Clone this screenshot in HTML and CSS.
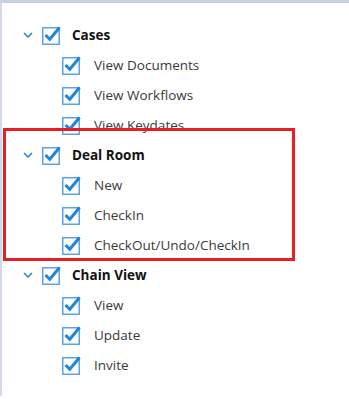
FILE: index.html
```html
<!DOCTYPE html>
<html>
<head>
<title>Permissions</title>
<link rel="stylesheet" href="styles.css">
</head>
<body>
<div id="main">
<ul class="tree">
<li class="group">
<div class="row parent">
<svg class="chev" width="10" height="6" viewBox="0 0 10 6"><path d="M1 1 L5 5 L9 1" fill="none" stroke="#2b88d8" stroke-width="1.6"/></svg>
<svg class="box" width="20" height="20" viewBox="0 0 20 20"><rect x="1.75" y="2.75" width="16.5" height="16.5" fill="#fff" stroke="#5aa3e6" stroke-width="1.5"/><path d="M4.5 10 L8.8 14.3 L18.5 2.5" fill="none" stroke="#1f86dc" stroke-width="3"/></svg>
<span>Cases</span>
</div>
<ul>
<li class="row child"><svg class="box" width="20" height="20" viewBox="0 0 20 20"><rect x="1.75" y="2.75" width="16.5" height="16.5" fill="#fff" stroke="#5aa3e6" stroke-width="1.5"/><path d="M4.5 10 L8.8 14.3 L18.5 2.5" fill="none" stroke="#1f86dc" stroke-width="3"/></svg><span>View Documents</span></li>
<li class="row child"><svg class="box" width="20" height="20" viewBox="0 0 20 20"><rect x="1.75" y="2.75" width="16.5" height="16.5" fill="#fff" stroke="#5aa3e6" stroke-width="1.5"/><path d="M4.5 10 L8.8 14.3 L18.5 2.5" fill="none" stroke="#1f86dc" stroke-width="3"/></svg><span>View Workflows</span></li>
<li class="row child"><svg class="box" width="20" height="20" viewBox="0 0 20 20"><rect x="1.75" y="2.75" width="16.5" height="16.5" fill="#fff" stroke="#5aa3e6" stroke-width="1.5"/><path d="M4.5 10 L8.8 14.3 L18.5 2.5" fill="none" stroke="#1f86dc" stroke-width="3"/></svg><span>View Keydates</span></li>
</ul>
</li>
<li class="group">
<div class="row parent">
<svg class="chev" width="10" height="6" viewBox="0 0 10 6"><path d="M1 1 L5 5 L9 1" fill="none" stroke="#2b88d8" stroke-width="1.6"/></svg>
<svg class="box" width="20" height="20" viewBox="0 0 20 20"><rect x="1.75" y="2.75" width="16.5" height="16.5" fill="#fff" stroke="#5aa3e6" stroke-width="1.5"/><path d="M4.5 10 L8.8 14.3 L18.5 2.5" fill="none" stroke="#1f86dc" stroke-width="3"/></svg>
<span>Deal Room</span>
</div>
<ul>
<li class="row child"><svg class="box" width="20" height="20" viewBox="0 0 20 20"><rect x="1.75" y="2.75" width="16.5" height="16.5" fill="#fff" stroke="#5aa3e6" stroke-width="1.5"/><path d="M4.5 10 L8.8 14.3 L18.5 2.5" fill="none" stroke="#1f86dc" stroke-width="3"/></svg><span>New</span></li>
<li class="row child"><svg class="box" width="20" height="20" viewBox="0 0 20 20"><rect x="1.75" y="2.75" width="16.5" height="16.5" fill="#fff" stroke="#5aa3e6" stroke-width="1.5"/><path d="M4.5 10 L8.8 14.3 L18.5 2.5" fill="none" stroke="#1f86dc" stroke-width="3"/></svg><span>CheckIn</span></li>
<li class="row child"><svg class="box" width="20" height="20" viewBox="0 0 20 20"><rect x="1.75" y="2.75" width="16.5" height="16.5" fill="#fff" stroke="#5aa3e6" stroke-width="1.5"/><path d="M4.5 10 L8.8 14.3 L18.5 2.5" fill="none" stroke="#1f86dc" stroke-width="3"/></svg><span>CheckOut/Undo/CheckIn</span></li>
</ul>
</li>
<li class="group">
<div class="row parent">
<svg class="chev" width="10" height="6" viewBox="0 0 10 6"><path d="M1 1 L5 5 L9 1" fill="none" stroke="#2b88d8" stroke-width="1.6"/></svg>
<svg class="box" width="20" height="20" viewBox="0 0 20 20"><rect x="1.75" y="2.75" width="16.5" height="16.5" fill="#fff" stroke="#5aa3e6" stroke-width="1.5"/><path d="M4.5 10 L8.8 14.3 L18.5 2.5" fill="none" stroke="#1f86dc" stroke-width="3"/></svg>
<span>Chain View</span>
</div>
<ul>
<li class="row child"><svg class="box" width="20" height="20" viewBox="0 0 20 20"><rect x="1.75" y="2.75" width="16.5" height="16.5" fill="#fff" stroke="#5aa3e6" stroke-width="1.5"/><path d="M4.5 10 L8.8 14.3 L18.5 2.5" fill="none" stroke="#1f86dc" stroke-width="3"/></svg><span>View</span></li>
<li class="row child"><svg class="box" width="20" height="20" viewBox="0 0 20 20"><rect x="1.75" y="2.75" width="16.5" height="16.5" fill="#fff" stroke="#5aa3e6" stroke-width="1.5"/><path d="M4.5 10 L8.8 14.3 L18.5 2.5" fill="none" stroke="#1f86dc" stroke-width="3"/></svg><span>Update</span></li>
<li class="row child"><svg class="box" width="20" height="20" viewBox="0 0 20 20"><rect x="1.75" y="2.75" width="16.5" height="16.5" fill="#fff" stroke="#5aa3e6" stroke-width="1.5"/><path d="M4.5 10 L8.8 14.3 L18.5 2.5" fill="none" stroke="#1f86dc" stroke-width="3"/></svg><span>Invite</span></li>
</ul>
</li>
</ul>
<div class="mark"></div>
</div>
</body>
</html>
```
FILE: styles.css
```css
*{
margin: 0;
padding: 0;
}
body{
background: #fff;
font-family: "Open Sans", "Noto Sans", sans-serif;
color: #333;
}
#main{
position: relative;
height: 396px;
border-top: 3px solid #c6d0e1;
border-left: 2px solid #d3dae7;
padding-top: 17px;
box-sizing: border-box;
overflow: hidden;
}
ul{
list-style-type: none;
}
.row{
display: flex;
align-items: center;
height: 30px;
}
.parent{
padding-left: 21px;
font-weight: bold;
font-size: 13.5px;
color: #111;
}
.chev{
display: block;
margin-right: 8px;
}
.parent .box{
margin-right: 11px;
}
.child{
padding-left: 59px;
font-size: 13.5px;
color: #3a3a3a;
}
.child .box{
margin-right: 13px;
}
.box{
display: block;
flex: none;
}
.mark{
position: absolute;
left: 1px;
top: 125px;
width: 292px;
height: 133px;
border: 3px solid #e81d25;
box-sizing: border-box;
}
```
